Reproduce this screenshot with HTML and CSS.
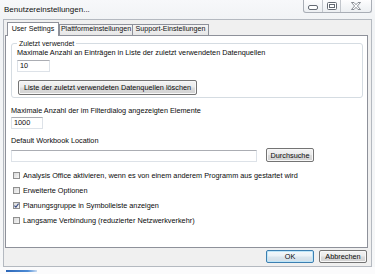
FILE: index.html
```html
<!DOCTYPE html>
<html lang="de">
<head>
<meta charset="utf-8">
<title>Benutzereinstellungen</title>
<link rel="stylesheet" href="styles.css">
</head>
<body>
<div class="window">
  <div class="titlebar">
    <span class="title">Benutzereinstellungen...</span>
    <div class="controls">
      <span class="ctl ctl-min"><svg width="10" height="5" viewBox="0 0 10 5"><rect x="0.5" y="0.5" width="9" height="4" rx="1.5" fill="#fff" stroke="#646a73"/></svg></span>
      <span class="ctl ctl-max"><svg width="10" height="8" viewBox="0 0 10 8"><rect x="0.5" y="0.5" width="9" height="7" rx="1" fill="#fff" stroke="#646a73"/><rect x="2.5" y="2.5" width="5" height="3" fill="none" stroke="#646a73"/></svg></span>
      <span class="ctl ctl-close"><svg width="10" height="8" viewBox="0 0 10 8"><polygon points="0.5,0.5 3,0.5 5,2.7 7,0.5 9.5,0.5 6.4,4 9.5,7.5 7,7.5 5,5.3 3,7.5 0.5,7.5 3.6,4" fill="#fff" stroke="#6f747c" stroke-width="0.8" stroke-linejoin="round"/></svg></span>
    </div>
  </div>
  <div class="client">
    <div class="tabs">
      <div class="tab tab-active">User Settings</div>
      <div class="tab tab-platform">Plattformeinstellungen</div>
      <div class="tab tab-support">Support-Einstellungen</div>
    </div>
    <div class="panel">
      <fieldset class="group">
        <legend class="legend">Zuletzt verwendet</legend>
        <div class="label">Maximale Anzahl an Einträgen in Liste der zuletzt verwendeten Datenquellen</div>
        <div class="input input-recent">10</div>
        <div class="btn btn-clear">Liste der zuletzt verwendeten Datenquellen löschen</div>
      </fieldset>
      <div class="label label-filter">Maximale Anzahl der im Filterdialog angezeigten Elemente</div>
      <div class="input input-filter">1000</div>
      <div class="label label-path">Default Workbook Location</div>
      <div class="path-row">
        <div class="input input-path"></div>
        <div class="btn btn-browse">Durchsuche</div>
      </div>
      <div class="checks">
        <div class="check"><span class="box"></span><span>Analysis Office aktivieren, wenn es von einem anderem Programm aus gestartet wird</span></div>
        <div class="check"><span class="box"></span><span>Erweiterte Optionen</span></div>
        <div class="check"><span class="box box-checked"><svg width="5" height="5" viewBox="0 0 5 5"><path d="M0.4 2.6 L1.9 4.2 L4.6 0.6" fill="none" stroke="#3b4f86" stroke-width="1.1"/></svg></span><span>Planungsgruppe in Symbolleiste anzeigen</span></div>
        <div class="check"><span class="box"></span><span>Langsame Verbindung (reduzierter Netzwerkverkehr)</span></div>
      </div>
    </div>
    <div class="footer">
      <div class="btn btn-ok">OK</div>
      <div class="btn btn-cancel">Abbrechen</div>
    </div>
  </div>
</div>
<div class="taskbar"></div>
</body>
</html>
```

FILE: styles.css
```css
* { box-sizing: border-box; }

html, body {
  margin: 0;
  padding: 0;
}

body {
  width: 375px;
  height: 274px;
  overflow: hidden;
  background: #fbfbfc;
  font-family: "Liberation Sans", Arial, sans-serif;
  font-size: 7.3px;
  line-height: 9px;
  color: #0a0a0a;
}

.window {
  width: 375px;
  height: 267px;
  display: flex;
  flex-direction: column;
  background: linear-gradient(#f7f8fa, #f1f3f5 20px, #f6f7f8);
}

.titlebar {
  height: 19px;
  flex: none;
  display: flex;
  justify-content: space-between;
  align-items: flex-start;
}

.title {
  margin: 5px 0 0 4px;
  font-size: 8px;
  line-height: 10px;
  color: #111;
}

.controls {
  display: flex;
  height: 13px;
  margin-right: 3px;
  border: 1px solid #a9aeb6;
  border-top: 0;
  border-radius: 0 0 3px 3px;
  background: linear-gradient(#fdfdfe, #eceff2);
}

.ctl {
  display: flex;
  align-items: center;
  justify-content: center;
  height: 12px;
}

.ctl + .ctl { border-left: 1px solid #c2c6cc; }

.ctl-min { width: 18px; }
.ctl-min svg { margin-top: 3px; }
.ctl-max { width: 18px; }
.ctl-close { width: 31px; }

.client {
  flex: 1;
  display: flex;
  flex-direction: column;
  margin: 0 3px 0 3px;
  border: 1px solid #b4b9c0;
  background: #f0f0f0;
}

.tabs {
  display: flex;
  align-items: flex-end;
  height: 14px;
  margin: 2px 0 0 3px;
}

.tab {
  height: 12px;
  padding-top: 0;
  border: 1px solid #8e919a;
  border-bottom: 0;
  text-align: center;
  font-size: 7.1px;
  line-height: 9px;
  white-space: nowrap;
  background: linear-gradient(#f4f4f4, #e6e6e6);
  color: #111;
}

.tab-active {
  position: relative;
  z-index: 1;
  width: 52px;
  height: 14px;
  padding-top: 1.5px;
  background: #fff;
}

.tab-platform { width: 74px; }
.tab-support { width: 77px; margin-left: -1px; }

.panel {
  height: 213px;
  margin: -1px 3px 0 1px;
  border: 1px solid #8e919a;
  background: #fff;
}

.group {
  margin: 3px 4px 0 5px;
  padding: 0 0 2px 5px;
  border: 1px solid #d5dce2;
  border-radius: 3px;
  min-width: 0;
}

.legend {
  padding: 0 2px;
  font-size: 7px;
  line-height: 9px;
  color: #111;
}

.label {
  white-space: nowrap;
}

.label-filter { margin: 8px 0 0 5px; }
.label-path { margin: 7px 0 0 5px; }

.input {
  height: 12px;
  padding-left: 2px;
  border: 1px solid #dde2e8;
  border-top-color: #abadb3;
  background: #fff;
  line-height: 10px;
}

.input-recent { width: 33px; margin-top: 3px; }
.input-filter { width: 32px; margin: 2px 0 0 5px; }
.input-path { width: 246px; }

.btn {
  display: flex;
  align-items: center;
  justify-content: center;
  border: 1px solid #747474;
  border-radius: 2px;
  background: linear-gradient(#f3f3f3, #ebebeb 48%, #dcdcdc 52%, #d2d2d2);
  box-shadow: inset 0 0 0 1px #f8f8f8;
  white-space: nowrap;
  line-height: 9px;
}

.btn-clear {
  width: 179px;
  height: 15px;
  margin: 8px 0 0 1px;
}

.path-row {
  display: flex;
  align-items: flex-end;
  gap: 9px;
  margin: 3px 0 0 5px;
}

.btn-browse { width: 48px; height: 14px; }

.checks {
  display: flex;
  flex-direction: column;
  gap: 6.2px;
  margin: 8.5px 0 0 7px;
}

.check {
  display: flex;
  align-items: center;
  gap: 3px;
  height: 9px;
  white-space: nowrap;
}

.box {
  display: flex;
  align-items: center;
  justify-content: center;
  width: 7px;
  height: 7px;
  border: 1px solid #8f8f8f;
  background: linear-gradient(135deg, #d9d9d9, #f6f6f6);
}

.footer {
  flex: 1;
  display: flex;
  justify-content: flex-end;
  align-items: flex-start;
  gap: 5px;
  padding: 2px 4px 0 0;
}

.btn-ok, .btn-cancel { width: 48px; height: 13px; }

.btn-ok {
  border-color: #3c7fb1;
  box-shadow: inset 0 0 0 1px #bfe6f8;
  background: linear-gradient(#f4f8fb, #eaf1f6 48%, #dbe6ee 52%, #d2dee8);
}

.taskbar {
  width: 31px;
  height: 2px;
  margin: 3px 0 0 6px;
  background: linear-gradient(90deg, #2d67b8, #4c8bd5 70%, rgba(90, 150, 220, 0.3));
}
```
